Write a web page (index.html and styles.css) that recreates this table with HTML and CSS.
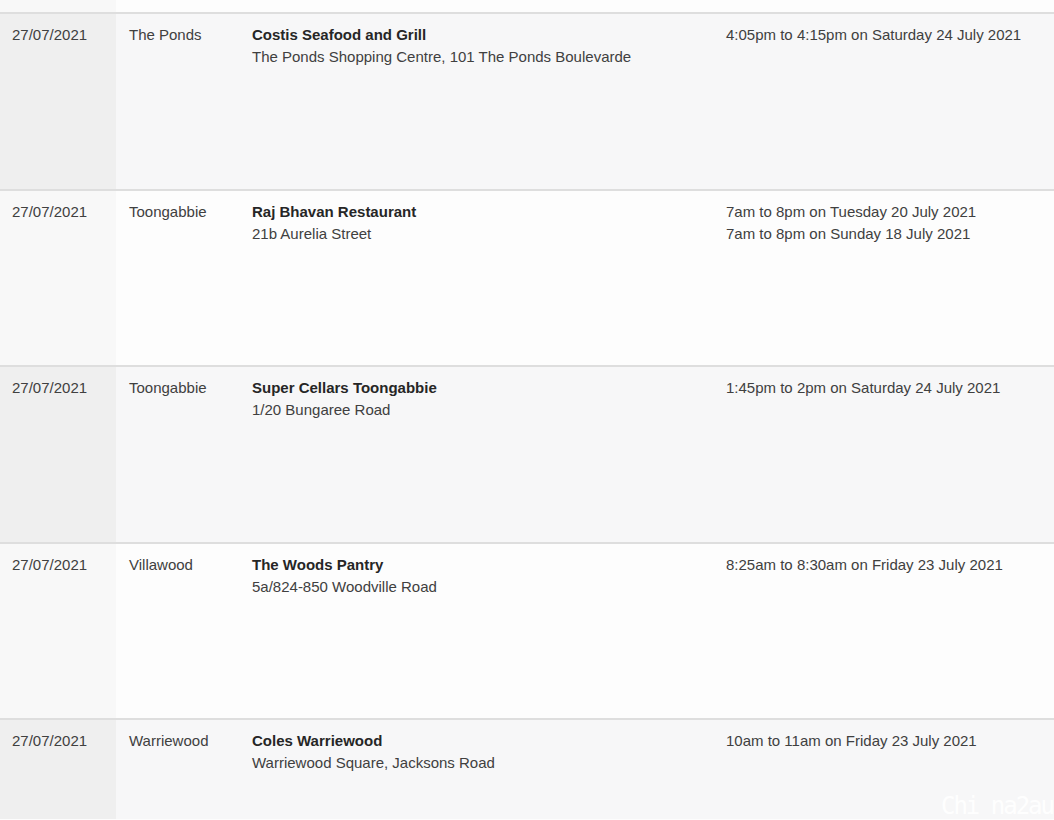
FILE: index.html
```html
<!DOCTYPE html>
<html>
<head>
<meta charset="utf-8">
<link rel="stylesheet" href="styles.css">
</head>
<body>
<div class="table">
  <div class="row top">
    <div class="cell c1"></div><div class="cell c2"></div><div class="cell c3"></div><div class="cell c4"></div>
  </div>
  <div class="row odd">
    <div class="cell c1">27/07/2021</div>
    <div class="cell c2">The Ponds</div>
    <div class="cell c3"><strong>Costis Seafood and Grill</strong><br>The Ponds Shopping Centre, 101 The Ponds Boulevarde</div>
    <div class="cell c4">4:05pm to 4:15pm on Saturday 24 July 2021</div>
  </div>
  <div class="row even">
    <div class="cell c1">27/07/2021</div>
    <div class="cell c2">Toongabbie</div>
    <div class="cell c3"><strong>Raj Bhavan Restaurant</strong><br>21b Aurelia Street</div>
    <div class="cell c4">7am to 8pm on Tuesday 20 July 2021<br>7am to 8pm on Sunday 18 July 2021</div>
  </div>
  <div class="row odd">
    <div class="cell c1">27/07/2021</div>
    <div class="cell c2">Toongabbie</div>
    <div class="cell c3"><strong>Super Cellars Toongabbie</strong><br>1/20 Bungaree Road</div>
    <div class="cell c4">1:45pm to 2pm on Saturday 24 July 2021</div>
  </div>
  <div class="row even">
    <div class="cell c1">27/07/2021</div>
    <div class="cell c2">Villawood</div>
    <div class="cell c3"><strong>The Woods Pantry</strong><br>5a/824-850 Woodville Road</div>
    <div class="cell c4">8:25am to 8:30am on Friday 23 July 2021</div>
  </div>
  <div class="row odd last">
    <div class="cell c1">27/07/2021</div>
    <div class="cell c2">Warriewood</div>
    <div class="cell c3"><strong>Coles Warriewood</strong><br>Warriewood Square, Jacksons Road</div>
    <div class="cell c4">10am to 11am on Friday 23 July 2021</div>
  </div>
</div>
<div class="watermark">Chi na2au</div>
</body>
</html>
```
FILE: styles.css
```css
html, body {
  margin: 0;
  padding: 0;
  height: 820px;
  overflow: hidden;
  background: #fdfdfd;
}
body {
  font-family: "Liberation Sans", Arial, sans-serif;
  font-size: 15px;
  line-height: 22px;
  color: #404040;
  position: relative;
}
.table {
  display: flex;
  flex-direction: column;
}
.row {
  display: flex;
  height: 174.5px;
  border-top: 2px solid #dedede;
}
.row.top {
  height: 12px;
  border-top: none;
}
.row.last {
  height: 99px;
}
.cell {
  box-sizing: border-box;
  padding-top: 10px;
  padding-left: 13px;
}
.c1 { width: 116px; padding-left: 12px; }
.c2 { width: 123px; }
.c3 { width: 474px; }
.c4 { flex: 1; }
strong {
  font-weight: bold;
  color: #262626;
}
.odd { background: #f7f7f8; }
.odd .c1 { background: #efefef; }
.even { background: #fdfdfd; }
.even .c1 { background: #f8f8f8; }
.top { background: #fdfdfd; }
.top .c1 { background: #f8f8f8; }
.watermark {
  position: absolute;
  right: 1px;
  top: 792px;
  font-family: "DejaVu Sans Mono", monospace;
  font-size: 24px;
  line-height: 28px;
  color: rgba(255,255,255,0.95);
  letter-spacing: -2px;
}
```
